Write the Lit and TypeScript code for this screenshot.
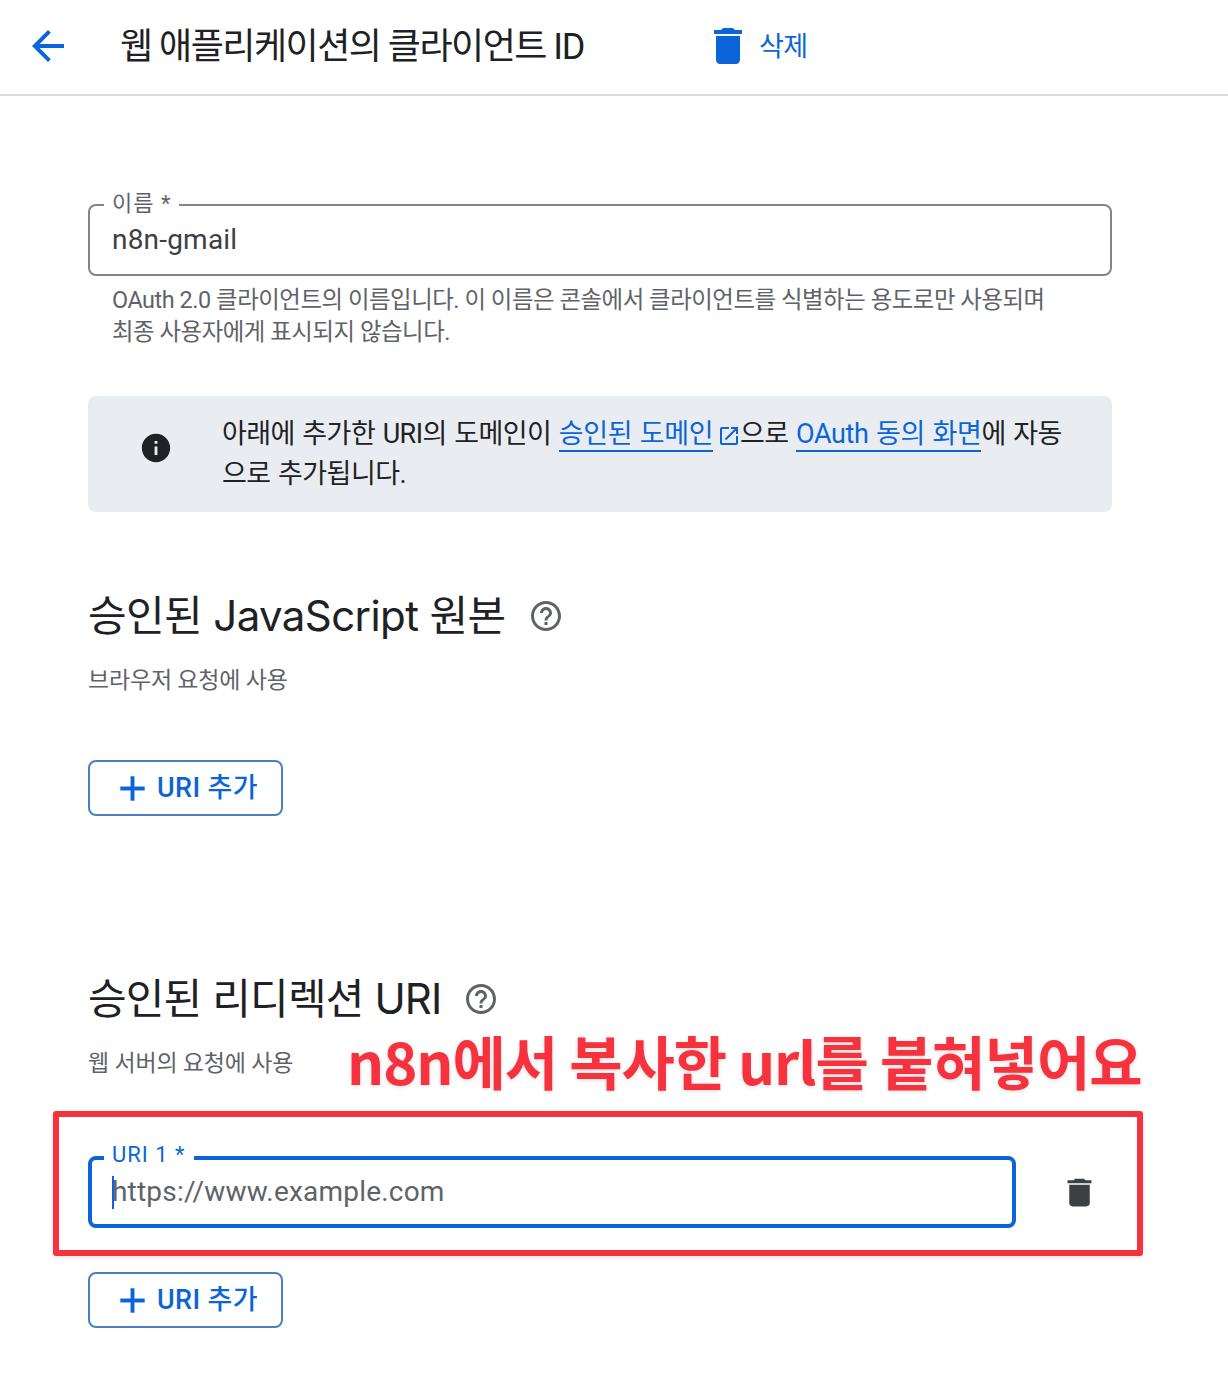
import { LitElement, html, css, svg } from "lit";
import { customElement } from "lit/decorators.js";

const icon = (cls: string, d: string, ratio = "xMidYMid meet") =>
  html`<svg class=${cls} viewBox="0 0 24 24" preserveAspectRatio=${ratio} aria-hidden="true">${svg`<path d=${d}></path>`}</svg>`;

const TRASH = "M6 19c0 1.1.9 2 2 2h8c1.1 0 2-.9 2-2V7H6v12zM19 4h-3.5l-1-1h-5l-1 1H5v2h14V4z";
const BACK = "M20 11H7.83l5.59-5.59L12 4l-8 8 8 8 1.41-1.41L7.83 13H20v-2z";
const HELP = "M11 18h2v-2h-2v2zm1-16C6.48 2 2 6.48 2 12s4.48 10 10 10 10-4.48 10-10S17.52 2 12 2zm0 18c-4.41 0-8-3.59-8-8s3.59-8 8-8 8 3.59 8 8-3.59 8-8 8zm0-14c-2.21 0-4 1.79-4 4h2c0-1.1.9-2 2-2s2 .9 2 2c0 2-3 1.75-3 5h2c0-2.25 3-2.5 3-5 0-2.21-1.79-4-4-4z";
const INFO = "M12 2C6.48 2 2 6.48 2 12s4.48 10 10 10 10-4.48 10-10S17.52 2 12 2zm1 15h-2v-6h2v6zm0-8h-2V7h2v2z";
const OPEN = "M19 19H5V5h7V3H5c-1.11 0-2 .9-2 2v14c0 1.1.89 2 2 2h14c1.1 0 2-.9 2-2v-7h-2v7zM14 3v2h3.59l-9.83 9.83 1.41 1.41L19 6.41V10h2V3h-7z";
const ADD = "M19 13h-6v6h-2v-6H5v-2h6V5h2v6h6v2z";

@customElement("app-root")
export class AppRoot extends LitElement {
  static styles = css`
    :host {
      display: block;
      position: relative;
      width: 1228px;
      height: 1396px;
      overflow: hidden;
      background: #fff;
      font-family: Roboto, "Noto Sans CJK KR", sans-serif;
      color: #202124;
    }
    svg { display: block; fill: currentColor; flex: none; }
    .topbar {
      height: 94px;
      box-sizing: content-box;
      border-bottom: 2px solid #dadce0;
      display: flex;
      align-items: center;
      padding-left: 24px;
    }
    .back { width: 48px; height: 48px; color: #0b65d8; margin: -2px 48px 0 0; }
    .title { font-size: 36px; line-height: 48px; letter-spacing: -1.5px; width: 584px; white-space: nowrap; }
    .del { display: flex; align-items: center; color: #0b65d8; font-size: 27px; letter-spacing: -0.6px; gap: 7px; }
    .del span { line-height: 36px; }
    .del-icon { width: 48px; height: 48px; margin-bottom: 2px; }
    .page { padding: 108px 0 0 88px; width: 1024px; }
    .field {
      position: relative;
      height: 72px;
      border: 2px solid #80868b;
      border-radius: 8px;
      box-sizing: border-box;
      padding: 0 0 2px 22px;
      display: flex;
      align-items: center;
      font-size: 28px;
      letter-spacing: 0.2px;
      color: #3c4043;
    }
    .label {
      position: absolute;
      left: 14px;
      top: -15px;
      padding: 0 8px;
      background: #fff;
      font-size: 22px;
      line-height: 26px;
      letter-spacing: 1px;
      color: #5f6368;
      white-space: nowrap;
    }
    .hint { margin: 8px 0 0 24px; font-size: 23.4px; line-height: 32px; color: #5f6368; letter-spacing: -0.44px; width: 945px; }
    .notice {
      margin-top: 48px;
      height: 116px;
      box-sizing: border-box;
      background: #e9edf1;
      border-radius: 8px;
      display: flex;
      align-items: center;
      padding-left: 51px;
    }
    .info { width: 34px; height: 34px; color: #202124; margin: 0 49px 12px 0; }
    .notice-text { font-size: 27px; line-height: 40px; letter-spacing: -0.55px; word-spacing: 1.3px; width: 850px; }
    .link { color: #0b65d8; border-bottom: 2px solid #0b65d8; letter-spacing: -0.4px; }
    .ext { display: inline-block; width: 24px; height: 24px; color: #0b65d8; vertical-align: -5px; margin: 0 -1px 0 4px; }
    .heading { display: flex; align-items: center; font-family: Inter, "Noto Sans CJK KR", sans-serif; font-size: 42px; line-height: 56px; letter-spacing: -0.6px; white-space: nowrap; }
    .heading svg { width: 36px; height: 36px; color: #5f6368; margin-left: 22px; }
    .h1 { margin-top: 76px; }
    .h2 { margin-top: 155px; letter-spacing: -0.85px; }
    .sub { font-size: 23px; line-height: 32px; color: #5f6368; letter-spacing: -0.2px; margin-top: 21px; }
    .btn {
      width: 195px;
      height: 56px;
      box-sizing: border-box;
      border: 2px solid #4a7fc4;
      border-radius: 8px;
      display: flex;
      align-items: center;
      padding-left: 22px;
      color: #0b65d8;
      font-size: 27px;
      font-weight: 500;
      letter-spacing: 0.4px;
      white-space: nowrap;
    }
    .btn svg { width: 41px; height: 41px; margin-right: 4px; stroke: currentColor; stroke-width: 0.25; }
    .btn span { margin-bottom: 6px; }
    .b1 { margin-top: 63px; }
    .uri-row { display: flex; align-items: center; margin-top: 76px; }
    .uri { width: 928px; border: 4px solid #0b65d8; padding-left: 20px; color: #5f6368; font-size: 28px; flex: none; }
    .uri .label { color: #0b65d8; left: 12px; top: -18px; }
    .caret { position: absolute; left: 20px; top: 16px; width: 2px; height: 33px; background: #0b65d8; }
    .row-del { width: 41px; height: 37px; color: #3c4043; margin-left: 43px; }
    .b2 { margin-top: 44px; }
    .redbox {
      position: absolute;
      left: 53px;
      top: 1111px;
      width: 1090px;
      height: 145px;
      box-sizing: border-box;
      border: 6px solid #f7323f;
      border-radius: 3px;
      box-shadow: 0 1px 4px rgba(0,0,0,.12);
    }
    .note {
      position: absolute;
      left: 347px;
      top: 1022px;
      font-family: "Noto Sans CJK KR", sans-serif;
      font-size: 58px;
      line-height: 76px;
      font-weight: 700;
      letter-spacing: -1.05px;
      color: #f7323f;
      white-space: nowrap;
      text-shadow: 0 1px 4px rgba(0,0,0,.15);
    }
  `;

  render() {
    return html`
      <header class="topbar">
        ${icon("back", BACK)}
        <div class="title">웹 애플리케이션의 클라이언트 ID</div>
        <div class="del">${icon("del-icon", TRASH)}<span>삭제</span></div>
      </header>
      <main class="page">
        <div class="field"><span class="label">이름 *</span>n8n-gmail</div>
        <div class="hint">OAuth 2.0 클라이언트의 이름입니다. 이 이름은 콘솔에서 클라이언트를 식별하는 용도로만 사용되며 최종 사용자에게 표시되지 않습니다.</div>
        <div class="notice">
          ${icon("info", INFO)}
          <div class="notice-text">아래에 추가한 URI의 도메인이 <span class="link">승인된 도메인</span>${icon("ext", OPEN)}으로 <span class="link">OAuth 동의 화면</span>에 자동으로 추가됩니다.</div>
        </div>
        <div class="heading h1">승인된 JavaScript 원본 ${icon("", HELP)}</div>
        <div class="sub">브라우저 요청에 사용</div>
        <div class="btn b1">${icon("", ADD)}<span>URI 추가</span></div>
        <div class="heading h2">승인된 리디렉션 URI ${icon("", HELP)}</div>
        <div class="sub">웹 서버의 요청에 사용</div>
        <div class="uri-row">
          <div class="field uri"><span class="label">URI 1 *</span><span class="caret"></span>https://www.example.com</div>
          ${icon("row-del", TRASH, "none")}
        </div>
        <div class="btn b2">${icon("", ADD)}<span>URI 추가</span></div>
      </main>
      <div class="note">n8n에서 복사한 url를 붙혀넣어요</div>
      <div class="redbox"></div>
    `;
  }
}
